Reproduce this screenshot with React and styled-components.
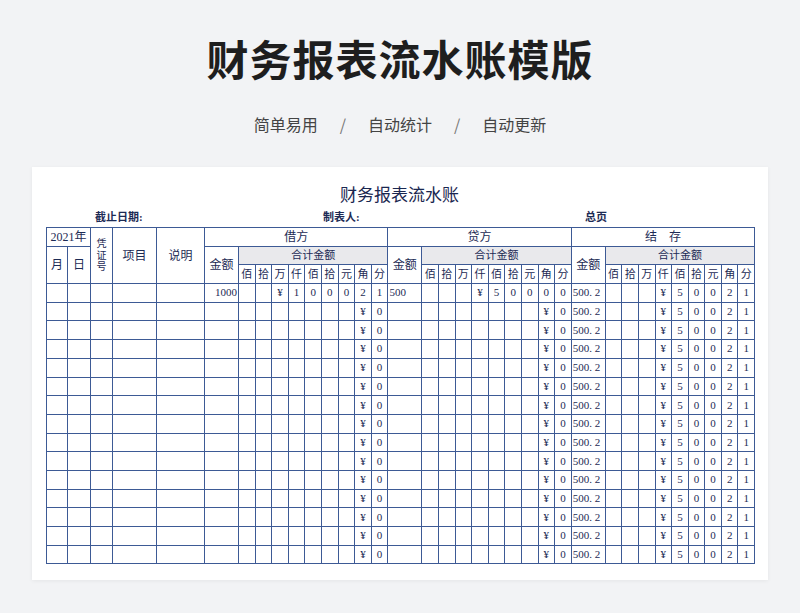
import styled, { createGlobalStyle } from 'styled-components'

const Global = createGlobalStyle`
  body { margin: 0; background: #f2f3f5; font-family: "Noto Sans CJK SC", "Noto Sans", sans-serif; }
`

const Page = styled.div`
  width: 800px;
  height: 613px;
  display: flex;
  flex-direction: column;
  align-items: center;
`

const Title = styled.h1`
  margin: 27px 0 0;
  height: 54px;
  font-size: 42px;
  font-weight: 700;
  color: #1e1e1e;
  letter-spacing: 1px;
`

const Sub = styled.div`
  margin-top: 31px;
  font-size: 16px;
  color: #444;
  display: flex;
  gap: 22px;
  span { color: #777; }
`

const Card = styled.div`
  margin-top: 31px;
  width: 736px;
  height: 413px;
  background: #fff;
  box-sizing: border-box;
  padding: 18px 15px 0 14px;
  box-shadow: 0 1px 4px rgba(0,0,0,0.06);
  font-family: "Liberation Serif", "Noto Sans CJK SC", serif;
  color: #1d2b55;
`

const SheetTitle = styled.div`
  text-align: center;
  font-size: 17px;
  height: 22px;
  line-height: 22px;
  color: #1a2750;
`

const Info = styled.div`
  display: grid;
  grid-template-columns: 49px 228px 262px 1fr;
  font-size: 11px;
  font-weight: 700;
  height: 20px;
  line-height: 20px;
`

const Table = styled.table`
  border-collapse: collapse;
  table-layout: fixed;
  width: 707px;
  font-size: 11px;
  td {
    border: 1px solid #3d5a95;
    text-align: center;
    padding: 0;
    height: 17.7px;
    line-height: 1;
    overflow: hidden;
    white-space: nowrap;
  }
`

const Gray = styled.td`
  background: #e9e9ec;
`

const Big = styled.td`
  font-size: 12px;
`

const Amount = styled.td`
  text-align: right !important;
  padding-right: 1px !important;
`

const Left = styled.td`
  text-align: left !important;
  padding-left: 1px !important;
`

const DIG = ['佰', '拾', '万', '仟', '佰', '拾', '元', '角', '分']
const blankDigits = ['', '', '', '', '', '', '', '¥', '0']
const debit1 = ['', '', '¥', '1', '0', '0', '0', '2', '1']
const credit1 = ['', '', '', '¥', '5', '0', '0', '0', '0']
const balance = ['', '', '', '¥', '5', '0', '0', '2', '1']

const Cols = () => (
  <colgroup>
    <col style={{ width: 21 }} />
    <col style={{ width: 23 }} />
    <col style={{ width: 22 }} />
    <col style={{ width: 44 }} />
    <col style={{ width: 48 }} />
    {[0, 1, 2].map(s => [
      <col key={`a${s}`} style={{ width: 34 }} />,
      ...DIG.map((_, i) => <col key={`${s}-${i}`} style={{ width: 16.6 }} />),
    ])}
  </colgroup>
)

const Section = ({ name }) => <Big colSpan={10}>{name}</Big>

export default function App() {
  const rows = Array.from({ length: 15 }, (_, i) => i)
  return (
    <Page>
      <Global />
      <Title>财务报表流水账模版</Title>
      <Sub>简单易用<span>/</span>自动统计<span>/</span>自动更新</Sub>
      <Card>
        <SheetTitle>财务报表流水账</SheetTitle>
        <Info><span /><span>截止日期:</span><span>制表人:</span><span>总页</span></Info>
        <Table>
          <Cols />
          <tbody>
            <tr>
              <Big colSpan={2}>2021年</Big>
              <td rowSpan={3} style={{ fontSize: 10, lineHeight: 1.15 }}>凭<br />证<br />号</td>
              <Big rowSpan={3}>项目</Big>
              <Big rowSpan={3}>说明</Big>
              <Section name="借方" />
              <Section name="贷方" />
              <Section name="结　存" />
            </tr>
            <tr>
              <Big rowSpan={2}>月</Big>
              <Big rowSpan={2}>日</Big>
              {[0, 1, 2].map(s => [
                <Big key={`m${s}`} rowSpan={2}>金额</Big>,
                <Gray key={`g${s}`} colSpan={9}>合计金额</Gray>,
              ])}
            </tr>
            <tr>
              {[0, 1, 2].map(s => DIG.map((d, i) => <td key={`${s}${i}`}>{d}</td>))}
            </tr>
            {rows.map(r => (
              <tr key={r}>
                <td /><td /><td /><td /><td />
                <Amount>{r === 0 ? '1000' : ''}</Amount>
                {(r === 0 ? debit1 : blankDigits).map((d, i) => <td key={`d${i}`}>{d}</td>)}
                <Left>{r === 0 ? '500' : ''}</Left>
                {(r === 0 ? credit1 : blankDigits).map((d, i) => <td key={`c${i}`}>{d}</td>)}
                <Left>500. 2</Left>
                {balance.map((d, i) => <td key={`b${i}`}>{d}</td>)}
              </tr>
            ))}
          </tbody>
        </Table>
      </Card>
    </Page>
  )
}
